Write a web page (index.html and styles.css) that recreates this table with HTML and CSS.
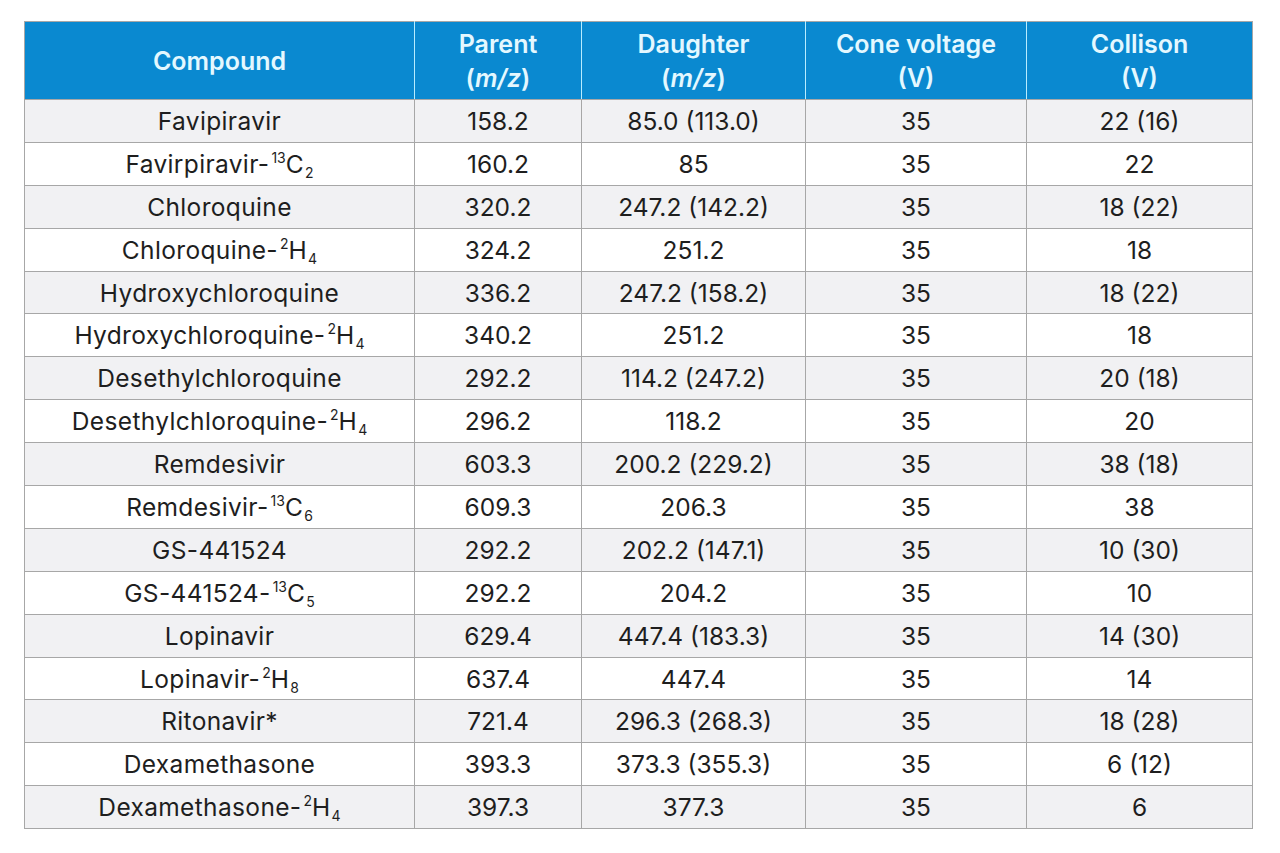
FILE: index.html
```html
<!DOCTYPE html>
<html>
<head>
<meta charset="utf-8">
<link rel="stylesheet" href="styles.css">
</head>
<body>
<table class="tbl">
  <colgroup>
    <col class="c1"><col class="c2"><col class="c3"><col class="c4"><col class="c5">
  </colgroup>
  <thead>
    <tr>
      <th>Compound</th>
      <th>Parent<br>(<i>m/z</i>)</th>
      <th>Daughter<br>(<i>m/z</i>)</th>
      <th>Cone voltage<br>(V)</th>
      <th>Collison<br>(V)</th>
    </tr>
  </thead>
  <tbody>
    <tr><td>Favipiravir</td><td>158.2</td><td>85.0 (113.0)</td><td>35</td><td>22 (16)</td></tr>
    <tr><td>Favirpiravir-<sup>13</sup>C<sub>2</sub></td><td>160.2</td><td>85</td><td>35</td><td>22</td></tr>
    <tr><td>Chloroquine</td><td>320.2</td><td>247.2 (142.2)</td><td>35</td><td>18 (22)</td></tr>
    <tr><td>Chloroquine-<sup>2</sup>H<sub>4</sub></td><td>324.2</td><td>251.2</td><td>35</td><td>18</td></tr>
    <tr><td>Hydroxychloroquine</td><td>336.2</td><td>247.2 (158.2)</td><td>35</td><td>18 (22)</td></tr>
    <tr><td>Hydroxychloroquine-<sup>2</sup>H<sub>4</sub></td><td>340.2</td><td>251.2</td><td>35</td><td>18</td></tr>
    <tr><td>Desethylchloroquine</td><td>292.2</td><td>114.2 (247.2)</td><td>35</td><td>20 (18)</td></tr>
    <tr><td>Desethylchloroquine-<sup>2</sup>H<sub>4</sub></td><td>296.2</td><td>118.2</td><td>35</td><td>20</td></tr>
    <tr><td>Remdesivir</td><td>603.3</td><td>200.2 (229.2)</td><td>35</td><td>38 (18)</td></tr>
    <tr><td>Remdesivir-<sup>13</sup>C<sub>6</sub></td><td>609.3</td><td>206.3</td><td>35</td><td>38</td></tr>
    <tr><td>GS-441524</td><td>292.2</td><td>202.2 (147.1)</td><td>35</td><td>10 (30)</td></tr>
    <tr><td>GS-441524-<sup>13</sup>C<sub>5</sub></td><td>292.2</td><td>204.2</td><td>35</td><td>10</td></tr>
    <tr><td>Lopinavir</td><td>629.4</td><td>447.4 (183.3)</td><td>35</td><td>14 (30)</td></tr>
    <tr><td>Lopinavir-<sup>2</sup>H<sub>8</sub></td><td>637.4</td><td>447.4</td><td>35</td><td>14</td></tr>
    <tr><td>Ritonavir*</td><td>721.4</td><td>296.3 (268.3)</td><td>35</td><td>18 (28)</td></tr>
    <tr><td>Dexamethasone</td><td>393.3</td><td>373.3 (355.3)</td><td>35</td><td>6 (12)</td></tr>
    <tr><td>Dexamethasone-<sup>2</sup>H<sub>4</sub></td><td>397.3</td><td>377.3</td><td>35</td><td>6</td></tr>
  </tbody>
</table>
</body>
</html>
```
FILE: styles.css
```css
html, body {
  margin: 0;
  padding: 0;
  background: #ffffff;
}
body {
  padding: 21px 0 0 24px;
  font-family: Inter, "Liberation Sans", sans-serif;
}
.tbl {
  border-collapse: collapse;
  width: 1228px;
  table-layout: fixed;
}
.c1 { width: 390px; }
.c2 { width: 167px; }
.c3 { width: 224px; }
.c4 { width: 221px; }
.c5 { width: 226px; }
.tbl th {
  background: #0a89d0;
  color: #e4f8ff;
  font-weight: 600;
  font-size: 25px;
  line-height: 34px;
  height: 77px;
  padding: 0;
  text-align: center;
  vertical-align: middle;
  border: 1px solid #a7a7a7;
  border-left-color: #b8ecff;
  border-right-color: #b8ecff;
}
.tbl th:first-child { border-left-color: #a7a7a7; }
.tbl th:last-child { border-right-color: #a7a7a7; }
.tbl th i { font-weight: 600; }
.tbl td {
  font-size: 24.5px;
  color: #1e1e1e;
  text-align: center;
  vertical-align: middle;
  height: 41.9px;
  line-height: 30px;
  padding: 0;
  border: 1px solid #a7a7a7;
}
.tbl td:first-child { letter-spacing: 0.35px; }
.tbl tbody tr:nth-child(odd) td { background: #f1f1f3; }
.tbl tbody tr:nth-child(even) td { background: #ffffff; }
.tbl sup, .tbl sub {
  font-size: 14px;
  line-height: 0;
  position: relative;
  vertical-align: baseline;
  letter-spacing: 0;
}
.tbl sup { top: -10px; margin-left: 2px; }
.tbl sub { top: 5px; margin-left: 1px; }
```
